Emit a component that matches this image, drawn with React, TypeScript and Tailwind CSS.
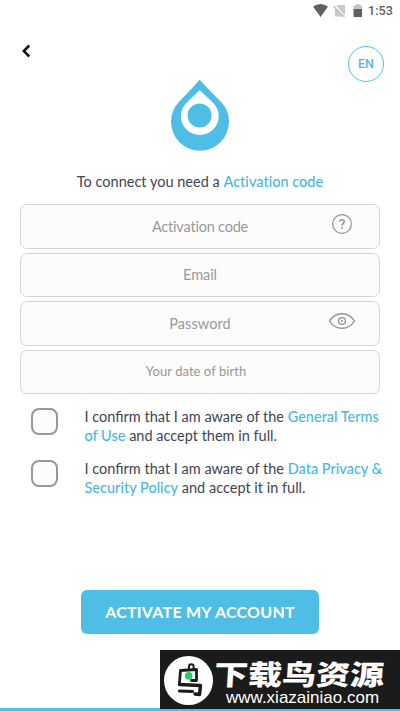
import type { ReactNode } from "react";

const sans = "font-['Lato','Noto_Sans',sans-serif]";

function StatusBar() {
  return (
    <div className="flex h-[22px] items-center justify-end pr-[7px]">
      <svg width="50" height="22" viewBox="0 0 50 22" className="mr-[5px]">
        <path d="M0 6.5 Q7.5 1.5 15 6.5 L7.6 17 Z" fill="#606060" />
        <path d="M25 5 H32 V16.5 H22 V8 Z" fill="#cacaca" />
        <path d="M21 5.5 L32 17" stroke="#fff" strokeWidth="2.4" />
        <path d="M20.5 6.5 L31.5 17" stroke="#b8b8b8" strokeWidth="1.1" />
        <path d="M43 4 H46.5 V5.5 H49 V9 H40.5 V5.5 H43 Z" fill="#c4c4c4" />
        <path d="M40.5 9 H49 V17 H40.5 Z" fill="#606060" />
      </svg>
      <span className="w-[25px] whitespace-nowrap font-['Roboto',sans-serif] text-[12.5px] font-medium leading-[22px] tracking-[0.1px] text-[#5c5c5c]">1:53</span>
    </div>
  );
}

function Logo() {
  return (
    <svg width="60" height="74" viewBox="0 0 60 74" className="mx-auto block">
      <path d="M29.7 0.5 C35 7 43.5 15 50.5 22.2 A29 29 0 1 1 9.5 22.2 C16.5 15 24.5 7 29.7 0.5 Z" fill="#4fbee7" />
      <path d="M29.7 11 L43.3 23.9 A18.9 18.9 0 1 1 16.3 23.9 Z" fill="#fff" />
      <circle cx="29.6" cy="36.5" r="12" fill="#4fbee7" />
    </svg>
  );
}

function Field({ label, spacing, icon }: { label: string; spacing: string; icon?: ReactNode }) {
  return (
    <div className="grid h-[44.5px] grid-cols-[1fr_auto_1fr] items-center rounded-[7px] border border-[#d4d4d4] bg-[#fcfcfc]">
      <span />
      <span className={"whitespace-nowrap pt-px text-[#999] " + spacing}>{label}</span>
      <span className="flex justify-end pr-[23px]">{icon}</span>
    </div>
  );
}

function Check({ children }: { children: ReactNode }) {
  return (
    <div className="flex h-[52.3px] items-start">
      <span className="ml-[31px] mt-[0.5px] size-[27px] shrink-0 rounded-[8px] border-2 border-[#9299a3] bg-[#fcfcfc]" />
      <div className="ml-[26.5px] whitespace-nowrap text-[14.5px] leading-[19px] text-[#414551]">{children}</div>
    </div>
  );
}

const helpIcon = (
  <svg width="28" height="24" viewBox="0 0 28 24" fill="none" stroke="#8e949d" className="relative -top-[2.5px]">
    <circle cx="14" cy="12" r="9.4" strokeWidth="1.2" />
    <path d="M11.8 9.8 C11.8 7 16.2 7.1 16.2 9.7 C16.2 11.5 14 11.4 14 13.7" strokeWidth="1.6" />
    <circle cx="14" cy="16" r="1" fill="#8e949d" stroke="none" />
  </svg>
);

const eyeIcon = (
  <svg width="28" height="20" viewBox="0 0 28 20" fill="none" stroke="#8e949d" className="relative -top-[2px]">
    <path d="M1.5 10 C7.5 .3 20.5 .3 26.5 10 C20.5 19.7 7.5 19.7 1.5 10 Z" strokeWidth="1.4" strokeLinejoin="round" />
    <circle cx="14" cy="10" r="3.4" strokeWidth="1.4" />
    <circle cx="14" cy="10" r="1" fill="#8e949d" stroke="none" />
  </svg>
);

function Watermark() {
  return (
    <div className="absolute bottom-[2px] right-0 flex h-[59px] w-[240px] bg-[#1b1b1b]">
      <svg width="52" height="59" viewBox="0 0 52 59" className="ml-[2px] shrink-0">
        <circle cx="26.5" cy="30.5" r="24.5" fill="#fff" />
        <g fill="none" stroke="#1b1b1b" strokeLinecap="round" strokeLinejoin="round">
          <path d="M17.5 32.5 L18.5 20.5 L34.5 19.5 V30.5 H29.5" strokeWidth="2.8" />
          <path d="M27 18.5 V16.5 a2.3 2.3 0 1 1 4.6 0 V18.5" strokeWidth="2" />
          <path d="M17.5 34.5 L38.5 35.5 L37.5 44.5 L33 44" strokeWidth="3.4" />
          <path d="M17.5 41 L30.5 41.5" strokeWidth="3.2" />
        </g>
        <circle cx="26.7" cy="25.9" r="3.8" fill="#25cf61" />
      </svg>
      <div className="flex flex-1 flex-col pt-[10px] text-white">
        <div className="ml-[1px] h-[29px] origin-top -skew-x-3 scale-y-[0.82] whitespace-nowrap font-['Noto_Sans_CJK_SC',sans-serif] text-[34px] font-black leading-[34px]">下载鸟资源</div>
        <div className="ml-[12px] whitespace-nowrap font-['Liberation_Sans',sans-serif] text-[17px] leading-[18px]">www.xiazainiao.com</div>
      </div>
    </div>
  );
}

export default function App() {
  return (
    <div className={"relative flex h-[711px] w-[400px] flex-col overflow-hidden bg-white " + sans}>
      <StatusBar />
      <header className="flex h-[57px] items-start justify-between pl-[21px] pr-[16px]">
        <svg width="12" height="16" viewBox="0 0 12 16" className="mt-[21px]">
          <path d="M8.3 2.5 L2.8 8 L8.3 13.5" fill="none" stroke="#111" strokeWidth="2.5" />
        </svg>
        <button className="mt-[24px] size-[36px] rounded-full border border-[#4fbee7] font-['Roboto',sans-serif] text-[12.5px] font-medium text-[#55b8df]">EN</button>
      </header>
      <Logo />
      <p className="mt-[19px] h-[20px] whitespace-nowrap text-center text-[14.5px] leading-[20px] tracking-[0.01px] text-[#414551]">
        To connect you need a <span className="font-medium text-[#4bb7df]">Activation code</span>
      </p>
      <div className="mt-[12px] flex flex-col gap-[4px] px-[20px] text-[14.5px]">
        <Field label="Activation code" spacing="tracking-[-0.2px]" icon={helpIcon} />
        <Field label="Email" spacing="tracking-[-0.05px]" />
        <Field label="Password" spacing="tracking-[0.1px]" icon={eyeIcon} />
        <Field label="Your date of birth" spacing="text-[13px] tracking-[0.05px] relative right-[4px] -top-[0.5px]" />
      </div>
      <div className="mt-[13px]">
        <Check>
          <div>I confirm that I am aware of the <span className="font-medium text-[#4bb7df]">General Terms</span></div>
          <div><span className="font-medium text-[#4bb7df]">of Use</span> and accept them in full.</div>
        </Check>
        <Check>
          <div>I confirm that I am aware of the <span className="font-medium text-[#4bb7df]">Data Privacy &amp;</span></div>
          <div><span className="font-medium text-[#4bb7df]">Security Policy</span> and accept it in full.</div>
        </Check>
      </div>
      <button className="mx-auto mt-[78.4px] h-[44.5px] w-[238px] rounded-[6px] bg-[#4fbee7] text-[16px] font-bold tracking-[0.25px] text-white">ACTIVATE MY ACCOUNT</button>
      <div className="mt-auto h-[3.5px] bg-[#4fbee7]" />
      <Watermark />
    </div>
  );
}
